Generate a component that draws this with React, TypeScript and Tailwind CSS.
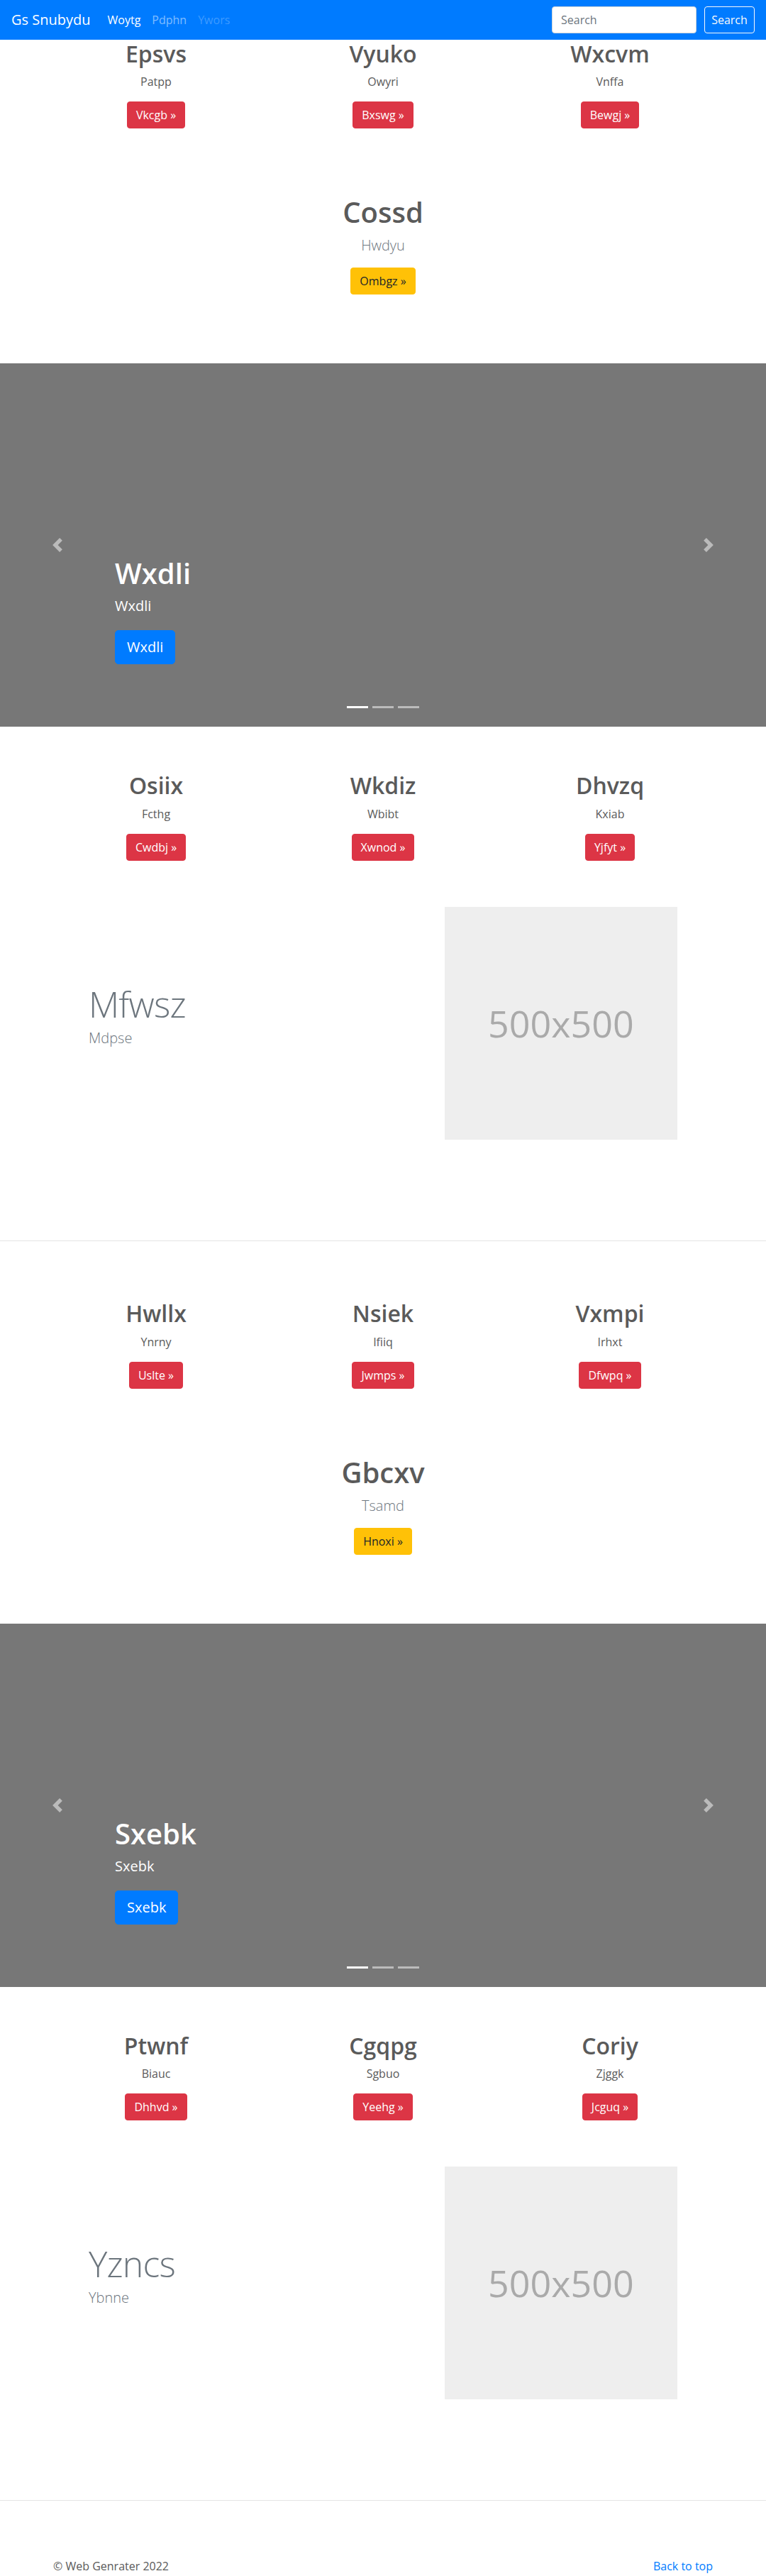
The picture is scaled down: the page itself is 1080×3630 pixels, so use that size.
import React from 'react';

type Col = { title: string; text: string; btn: string };

type Block = {
  top: Col[];
  hero: Col;
  slide: string;
  bottom: Col[];
  feature: { title: string; text: string };
};

const BLOCKS: Block[] = [
  {
    top: [
      { title: 'Epsvs', text: 'Patpp', btn: 'Vkcgb' },
      { title: 'Vyuko', text: 'Owyri', btn: 'Bxswg' },
      { title: 'Wxcvm', text: 'Vnffa', btn: 'Bewgj' },
    ],
    hero: { title: 'Cossd', text: 'Hwdyu', btn: 'Ombgz' },
    slide: 'Wxdli',
    bottom: [
      { title: 'Osiix', text: 'Fcthg', btn: 'Cwdbj' },
      { title: 'Wkdiz', text: 'Wbibt', btn: 'Xwnod' },
      { title: 'Dhvzq', text: 'Kxiab', btn: 'Yjfyt' },
    ],
    feature: { title: 'Mfwsz', text: 'Mdpse' },
  },
  {
    top: [
      { title: 'Hwllx', text: 'Ynrny', btn: 'Uslte' },
      { title: 'Nsiek', text: 'Ifiiq', btn: 'Jwmps' },
      { title: 'Vxmpi', text: 'Irhxt', btn: 'Dfwpq' },
    ],
    hero: { title: 'Gbcxv', text: 'Tsamd', btn: 'Hnoxi' },
    slide: 'Sxebk',
    bottom: [
      { title: 'Ptwnf', text: 'Biauc', btn: 'Dhhvd' },
      { title: 'Cgqpg', text: 'Sgbuo', btn: 'Yeehg' },
      { title: 'Coriy', text: 'Zjggk', btn: 'Jcguq' },
    ],
    feature: { title: 'Yzncs', text: 'Ybnne' },
  },
];

function Navbar() {
  return (
    <nav className="flex h-14 items-center justify-between bg-[#007bff] px-4">
      <div className="flex items-center">
        <a href="#" className="mr-4 py-[5px] text-xl leading-[1.5] text-white">
          Gs Snubydu
        </a>
        <ul className="flex">
          <li>
            <a href="#" className="block p-2 text-white">
              Woytg
            </a>
          </li>
          <li>
            <a href="#" className="block p-2 text-white/50">
              Pdphn
            </a>
          </li>
          <li>
            <a href="#" className="block p-2 text-white/25">
              Ywors
            </a>
          </li>
        </ul>
      </div>
      <form className="flex items-center gap-[11px]" onSubmit={(e) => e.preventDefault()}>
        <input
          placeholder="Search"
          aria-label="Search"
          className="h-[38px] w-[204px] rounded border border-[#ced4da] bg-white px-3 text-base text-[#495057] outline-none placeholder:text-[#6c757d]"
        />
        <button
          type="submit"
          className="h-[38px] w-[71px] rounded border border-[#f8f9fa] text-base text-[#f8f9fa]"
        >
          Search
        </button>
      </form>
    </nav>
  );
}

function Marketing({ cols }: { cols: Col[] }) {
  return (
    <div className="mx-auto grid w-[960px] grid-cols-3">
      {cols.map((c) => (
        <div key={c.title} className="mb-6 px-[15px] text-center">
          <h2 className="mb-2 text-[32px] font-semibold leading-[1.2]">{c.title}</h2>
          <p className="mx-3 mb-4 leading-6">{c.text}</p>
          <p>
            <a
              href="#"
              className="inline-block rounded border border-[#dc3545] bg-[#dc3545] px-3 py-1.5 leading-6 text-white"
            >
              {c.btn} »
            </a>
          </p>
        </div>
      ))}
    </div>
  );
}

function Hero({ hero }: { hero: Col }) {
  return (
    <div className="pt-[70px] text-center">
      <h1 className="mb-2 text-[40px] font-semibold leading-[1.2]">{hero.title}</h1>
      <p className="mb-4 text-xl font-light leading-[1.5] text-[#6c757d]">{hero.text}</p>
      <p>
        <a
          href="#"
          className="inline-block rounded border border-[#ffc107] bg-[#ffc107] px-3 py-1.5 leading-6 text-[#212529]"
        >
          {hero.btn} »
        </a>
      </p>
    </div>
  );
}

function Carousel({ title }: { title: string }) {
  return (
    <div className="relative mt-[97px] h-[512px] bg-[#777]">
      <a href="#" className="absolute inset-y-0 left-0 flex w-[15%] items-center justify-center opacity-50">
        <svg width="20" height="20" viewBox="0 0 8 8" fill="#fff">
          <path d="M5.25 0l-4 4 4 4 1.5-1.5L4.25 4l2.5-2.5L5.25 0z" />
        </svg>
      </a>
      <a href="#" className="absolute inset-y-0 right-0 flex w-[15%] items-center justify-center opacity-50">
        <svg width="20" height="20" viewBox="0 0 8 8" fill="#fff">
          <path d="M2.75 0l-1.5 1.5L3.75 4l-2.5 2.5L2.75 8l4-4-4-4z" />
        </svg>
      </a>

      <div className="absolute bottom-[52px] left-[15%] right-[15%] py-5 text-left text-white">
        <h1 className="mb-2 text-[40px] font-semibold leading-[1.2]">{title}</h1>
        <p className="mb-5 text-xl leading-[1.4]">{title}</p>
        <p className="mb-4">
          <a
            href="#"
            className="inline-block rounded-[5px] border border-[#007bff] bg-[#007bff] px-4 py-2 text-xl leading-[1.5] text-white"
          >
            {title}
          </a>
        </p>
      </div>

      <ol className="absolute bottom-[26px] left-0 right-0 flex justify-center gap-[6px]">
        <li className="h-[3px] w-[30px] bg-white" />
        <li className="h-[3px] w-[30px] bg-white opacity-50" />
        <li className="h-[3px] w-[30px] bg-white opacity-50" />
      </ol>
    </div>
  );
}

function Featurette({ title, text }: { title: string; text: string }) {
  return (
    <div className="mx-auto mt-[41px] flex w-[860px] items-center">
      <div className="w-7/12 px-[15px]">
        <h2 className="mb-2 text-[50px] font-light leading-none tracking-[-0.05rem] text-[#6c757d]">{title}</h2>
        <p className="mb-4 text-xl font-light leading-[1.5] text-[#6c757d]">{text}</p>
      </div>
      <div className="w-5/12 px-[15px]">
        <div className="flex aspect-square w-full items-center justify-center bg-[#eee] text-[52px] leading-none text-[#aaa]">
          500x500
        </div>
      </div>
    </div>
  );
}

export default function App() {
  return (
    <div className="min-h-screen bg-white font-['Open_Sans','Noto_Sans',sans-serif] text-base leading-6 text-[#5a5a5a]">
      <Navbar />

      {BLOCKS.map((b, i) => (
        <section key={b.slide} className={i === 0 ? 'pt-px' : 'pt-[83px]'}>
          <Marketing cols={b.top} />
          <Hero hero={b.hero} />
          <Carousel title={b.slide} />
          <div className="mt-16">
            <Marketing cols={b.bottom} />
          </div>
          <Featurette title={b.feature.title} text={b.feature.text} />
          <hr className="mt-[142px] border-t border-black/10" />
        </section>
      ))}

      <footer className="mx-auto mt-20 flex w-[960px] justify-between px-[15px]">
        <p className="mb-4">© Web Genrater 2022</p>
        <p className="mb-4">
          <a href="#" className="text-[#007bff]">
            Back to top
          </a>
        </p>
      </footer>
    </div>
  );
}
